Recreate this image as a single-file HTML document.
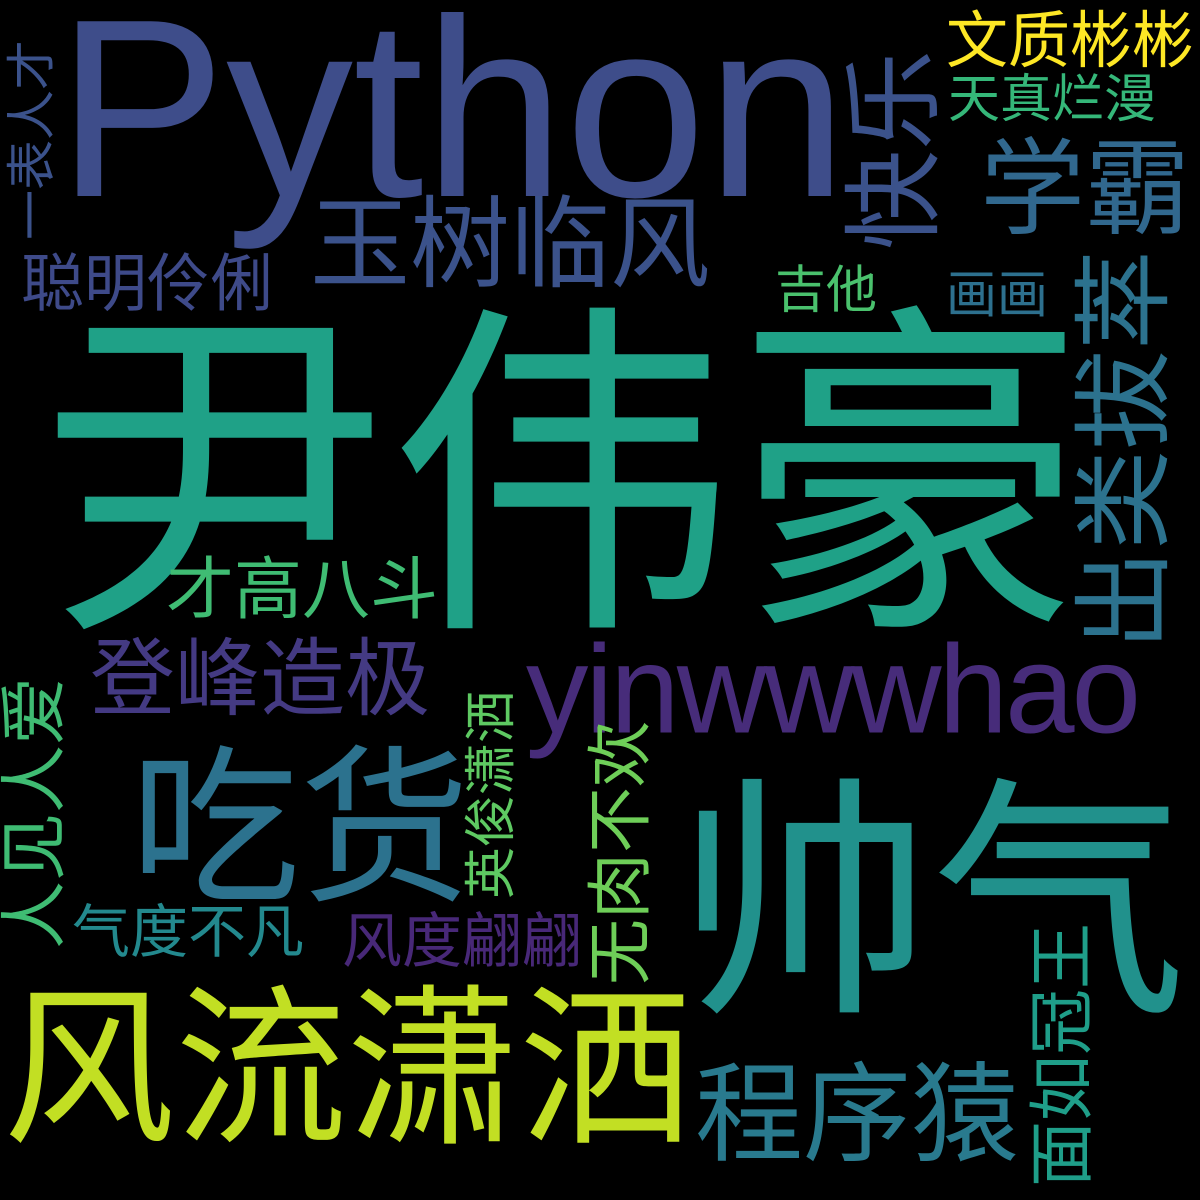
<!DOCTYPE html>
<html><head><meta charset="utf-8"><style>
html,body{margin:0;padding:0;background:#000;}
#c{position:relative;width:1200px;height:1200px;background:#000;overflow:hidden;}
.w{position:absolute;line-height:1;white-space:nowrap;font-family:"Liberation Sans","Noto Sans CJK SC",sans-serif;transform:translate(-50%,-50%);}
.v{transform:translate(-50%,-50%) rotate(-90deg);}
</style></head><body><div id="c">
<div class="w" style="left:452px;top:108px;font-size:254px;color:#3e4d8a">Python</div>
<div class="w" style="left:562px;top:480px;font-size:348px;color:#1fa187">尹伟豪</div>
<div class="w" style="left:932px;top:905px;font-size:255px;color:#21918c">帅气</div>
<div class="w" style="left:347px;top:1070px;font-size:172px;color:#c2df23">风流潇洒</div>
<div class="w" style="left:300px;top:830px;font-size:170px;color:#2c728e">吃货</div>
<div class="w" style="left:832px;top:690px;font-size:125px;letter-spacing:-3px;color:#472c7a">yinwwwhao</div>
<div class="w" style="left:857px;top:1115px;font-size:108px;color:#297a8e">程序猿</div>
<div class="w" style="left:260px;top:680px;font-size:85px;color:#443a83">登峰造极</div>
<div class="w" style="left:510px;top:245px;font-size:100px;color:#3b528b">玉树临风</div>
<div class="w" style="left:1085px;top:190px;font-size:105px;color:#31688e">学霸</div>
<div class="w v" style="left:895px;top:150px;font-size:100px;color:#3b528b">快乐</div>
<div class="w v" style="left:1125px;top:450px;font-size:100px;color:#2c728e">出类拔萃</div>
<div class="w" style="left:1070px;top:42px;font-size:62px;color:#fde725">文质彬彬</div>
<div class="w" style="left:1052px;top:100px;font-size:52px;color:#35b779">天真烂漫</div>
<div class="w" style="left:147px;top:285px;font-size:63px;color:#3e4a89">聪明伶俐</div>
<div class="w v" style="left:32px;top:140px;font-size:50px;color:#3b528b">一表人才</div>
<div class="w" style="left:826px;top:290px;font-size:51px;color:#4ac16d">吉他</div>
<div class="w" style="left:997px;top:295px;font-size:51px;color:#2d708e">画画</div>
<div class="w" style="left:302px;top:590px;font-size:68px;color:#3fbc73">才高八斗</div>
<div class="w v" style="left:35px;top:813px;font-size:68px;color:#3fbc73">人见人爱</div>
<div class="w v" style="left:492px;top:795px;font-size:52px;color:#5ec962">英俊潇洒</div>
<div class="w v" style="left:620px;top:853px;font-size:66px;color:#6ece58">无肉不欢</div>
<div class="w" style="left:188px;top:933px;font-size:58px;color:#23898e">气度不凡</div>
<div class="w" style="left:462px;top:942px;font-size:60px;color:#482878">风度翩翩</div>
<div class="w v" style="left:1062px;top:1055px;font-size:66px;color:#1f9e89">面如冠王</div>
</div></body></html>
